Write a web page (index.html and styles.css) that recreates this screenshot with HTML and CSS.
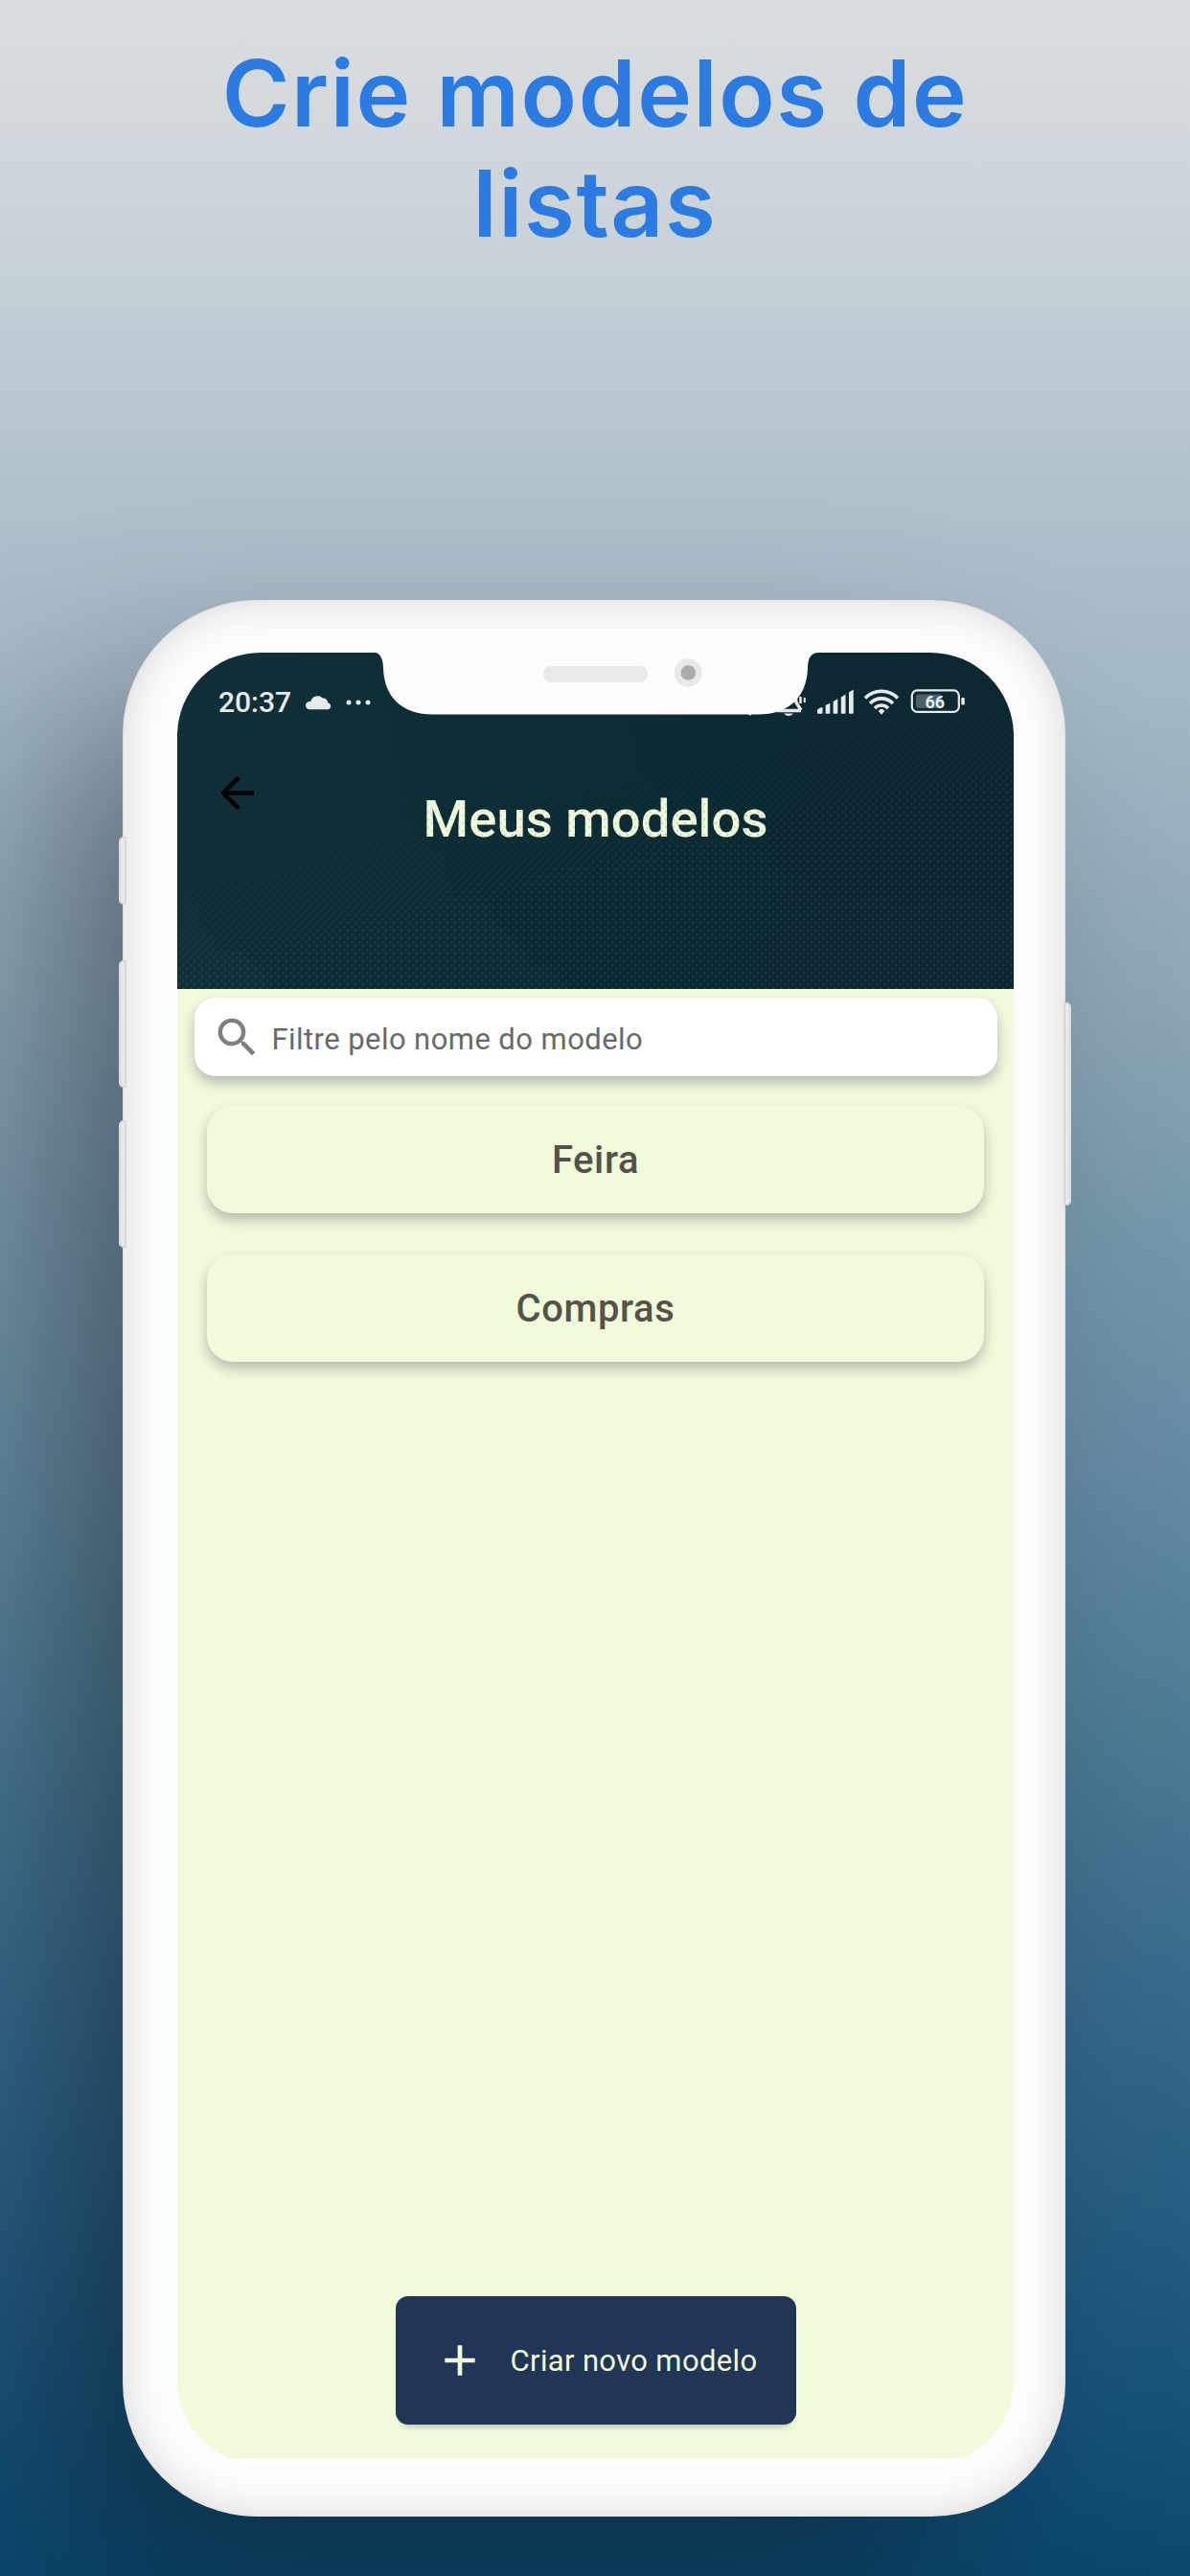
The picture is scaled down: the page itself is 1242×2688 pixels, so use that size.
FILE: index.html
```html
<!DOCTYPE html>
<html lang="pt-BR">
<head>
<meta charset="utf-8">
<title>Crie modelos de listas</title>
<link rel="stylesheet" href="styles.css">
</head>
<body>
<main class="poster">
  <h1 class="headline"><span class="line-a">Crie modelos de</span><br><span class="line-b">listas</span></h1>
  <div class="phone">
    <div class="body">
      <div class="screen">
        <header class="top">
          <svg class="weave" width="873" height="351" aria-hidden="true">
            <defs>
              <pattern id="dots" width="8" height="8" patternUnits="userSpaceOnUse">
                <circle cx="2" cy="2" r="1.2" fill="#3b5b60"/><circle cx="6" cy="6" r="1.2" fill="#3b5b60"/>
              </pattern>
              <linearGradient id="fade" x1="0" y1="0" x2="0.5" y2="1">
                <stop offset="0" stop-color="#fff" stop-opacity=".05"/>
                <stop offset=".5" stop-color="#fff" stop-opacity=".12"/>
                <stop offset="1" stop-color="#fff" stop-opacity=".4"/>
              </linearGradient>
              <mask id="m"><rect width="873" height="351" fill="url(#fade)"/></mask>
            </defs>
            <rect width="873" height="351" fill="url(#dots)" mask="url(#m)"/>
          </svg>
          <div class="status">
            <span class="clock">20:37</span>
            <svg class="cloud" width="28" height="16" viewBox="0 0 28 16"><path d="M4 15.3a4 4 0 0 1 .4-8.4h.9A7.3 7.3 0 0 1 17.800 3.600a5 5 0 0 1 5.500 4.600A3.700 3.700 0 0 1 23.800 15.300z" fill="#e6eaec"/></svg>
            <svg class="more" width="26" height="6" viewBox="0 0 26 6" fill="#e6eaec"><circle cx="3" cy="3" r="2.500"/><circle cx="13" cy="3" r="2.500"/><circle cx="23" cy="3" r="2.500"/></svg>
            <svg class="tray" width="232" height="32" viewBox="775 718 232 32" fill="none" stroke="#e6eaec">
              <path d="M777 744l4 4 3-4z" fill="#e6eaec" stroke="none"/>
              <path d="M809 742.500h25M828 726l1 8 5 8" stroke-width="3.400"/>
              <path d="M816 745.500h10q-5 5-10 0z" fill="#e6eaec" stroke="none"/>
              <path d="M833.500 728v7" stroke-width="2.500"/><path d="M837.800 729v5" stroke-width="2"/>
              <g fill="#e6eaec" stroke="none">
                <path d="M851 742.500q0-2.500 5.500-3.500v6q0 .7-.7.700h-4.100q-.7 0-.7-.7z"/>
                <path d="M859.600 737l4.700-2.300v10.300q0 .7-.7.700h-3.300q-.7 0-.7-.7z"/>
                <path d="M867.600 733l4.700-2.800v14.800q0 .7-.7.700h-3.300q-.7 0-.7-.7z"/>
                <path d="M875.800 728.500l4.700-3v19.500q0 .7-.7.700h-3.300q-.7 0-.7-.7z"/>
                <path d="M884 723.500l4.700-3v24.500q0 .7-.7.700h-3.300q-.7 0-.7-.7z"/>
              </g>
              <path d="M901 729.500a23.500 23.500 0 0 1 34 0" stroke-width="3.700"/>
              <path d="M906 735a16.500 16.500 0 0 1 24 0" stroke-width="3.700"/>
              <path d="M911 740a9.800 9.800 0 0 1 14 0" stroke-width="3.500"/>
              <path d="M914.700 743q3.300-4.500 6.600 0l-3.300 3.800z" fill="#e6eaec" stroke="none"/>
              <rect x="949.800" y="721.300" width="49" height="22.600" rx="5.500" stroke-width="2.200"/>
              <rect x="954" y="725.500" width="27" height="14.500" rx="2.500" fill="#4b6067" stroke="none"/>
              <rect x="1001.300" y="729" width="3.500" height="7.500" rx="1" fill="#e6eaec" stroke="none"/>
              <text x="973.800" y="739.700" class="charge">66</text>
            </svg>
          </div>
          <svg class="back" width="53" height="53" viewBox="0 0 24 24"><path d="M20 11H7.830l5.590-5.590L12 4l-8 8 8 8 1.410-1.410L7.830 13H20v-2z"/></svg>
          <h2 class="title">Meus modelos</h2>
        </header>
        <section class="content">
          <div class="search">
            <svg width="53" height="53" viewBox="0 0 24 24" fill="#7f7f7f"><path d="M15.500 14h-.79l-.28-.27A6.471 6.471 0 0 0 16 9.500 6.500 6.500 0 1 0 9.500 16c1.610 0 3.090-.59 4.230-1.570l.27.28v.79l5 4.990L20.490 19l-4.990-5zm-6 0C7.010 14 5 11.990 5 9.500S7.010 5 9.500 5 14 7.010 14 9.500 11.990 14 9.500 14z"/></svg>
            <span class="hint">Filtre pelo nome do modelo</span>
          </div>
          <div class="card">Feira</div>
          <div class="card">Compras</div>
          <button class="create">
            <svg width="32" height="32" viewBox="0 0 32 32"><path d="M16 .3v31.400M.3 16h31.400" stroke="#f0fadc" stroke-width="4.700"/></svg>
            <span>Criar novo modelo</span>
          </button>
        </section>
      </div>
      <svg class="notch" width="466" height="65" viewBox="389 681 466 65">
        <path d="M389 680C396 681 399.800 686 400 697C401 728 420 745.500 452 745.500H791C823 745.500 842 728 843 697C843.200 686 847 681 854 681V680z" fill="#fcfcfc"/>
        <rect x="567" y="695" width="109" height="17" rx="8" fill="#e9e9e9"/>
        <circle cx="718.300" cy="702" r="14.700" fill="#e9e9e9"/>
        <circle cx="718.300" cy="702" r="7.800" fill="#ababab"/>
      </svg>
    </div>
    <i class="key key-mute"></i>
    <i class="key key-up"></i>
    <i class="key key-down"></i>
    <i class="key key-power"></i>
  </div>
</main>
</body>
</html>
```
FILE: styles.css
```css
* { box-sizing: border-box; }

body { margin: 0; }

.poster {
  width: 1242px;
  height: 2688px;
  overflow: hidden;
  display: flex;
  flex-direction: column;
  align-items: center;
  background: linear-gradient(180deg, #dadee0 0%, #ccd4da 8%, #b0c1cb 19%, #a3b7c4 27%, #8da7b6 38%, #7798ac 47%, #648aa2 57%, #4a7993 68%, #35688b 78%, #1c557c 91%, #0a486e 100%);
  font-family: Roboto, "Liberation Sans", sans-serif;
}

.headline {
  margin: 0;
  height: 626px;
  padding-top: 40px;
  text-align: center;
  font: 600 96px/115px Inter, "Open Sans", sans-serif;
  color: #2c7be2;
  white-space: nowrap;
}

.line-a { letter-spacing: 1.6px; }
.line-b { letter-spacing: 1.6px; }

.phone {
  position: relative;
  width: 984px;
  height: 2000px;
  left: -1px;
}

.body {
  position: relative;
  height: 100%;
  padding: 55px 54px 55px 57px;
  border-radius: 140px;
  background: #fcfcfc;
  box-shadow: inset 0 0 44px rgba(0, 0, 0, .15), inset 0 0 2px rgba(0, 0, 0, .12), -85px 90px 200px -20px rgba(10, 10, 15, .42);
}

.key {
  position: absolute;
  left: -4px;
  width: 8px;
  border-radius: 5px 0 0 5px;
  background: #e8e8e8;
  border: 2px solid #dadada;
}
.key-mute { top: 247px; height: 71px; }
.key-up { top: 376px; height: 133px; }
.key-down { top: 543px; height: 133px; }
.key-power { left: 982px; top: 420px; height: 212px; border-radius: 0 5px 5px 0; }

.screen {
  height: 1890px;
  border-radius: 87px;
  overflow: hidden;
  background: #fff;
  display: flex;
  flex-direction: column;
}

.top {
  position: relative;
  height: 351px;
  flex: none;
  background: linear-gradient(100deg, #112f36, #0c2a32 55%, #0b2730);
}

.weave { position: absolute; inset: 0; }

.status {
  position: relative;
  display: flex;
  align-items: center;
  height: 34px;
  margin: 0 49px 0 43px;
  top: 35px;
}

.clock { font-size: 30px; line-height: 34px; color: #e6eaec; width: 91px; font-weight: 500; }
.cloud { margin: -1px 14px 0 0; }
.tray { margin-left: auto; }
.charge { font: 700 18px Roboto, sans-serif; fill: #e6eaec; stroke: none; text-anchor: middle; }

.back { display: block; margin: 86px 0 0 36px; }

.title {
  margin: -32px 0 0;
  text-align: center;
  font-size: 54.5px;
  line-height: 64px;
  font-weight: 500;
  color: #f0fadc;
}

.content {
  flex: none;
  height: 1533px;
  padding: 9px 17px 35px;
  background: #f1fadb;
  display: flex;
  flex-direction: column;
  align-items: center;
}

.search {
  width: 838px;
  height: 82px;
  flex: none;
  display: flex;
  align-items: center;
  padding-left: 18px;
  gap: 10px;
  border-radius: 22px;
  background: #fff;
  margin-bottom: 31px;
  box-shadow: 0 7px 13px rgba(60, 60, 90, .33);
}

.hint { font-size: 31px; letter-spacing: .43px; color: #696969; padding-top: 4px; }

.card {
  width: 811px;
  height: 112px;
  flex: none;
  display: flex;
  align-items: center;
  justify-content: center;
  border-radius: 27px;
  background: #f1fadb;
  margin-bottom: 43px;
  font-size: 40px;
  font-weight: 500;
  letter-spacing: .6px;
  color: #55524a;
  box-shadow: 0 7px 13px rgba(60, 60, 90, .33);
}

.create {
  margin-top: auto;
  width: 418px;
  height: 134px;
  display: flex;
  align-items: center;
  padding: 0 0 0 51px;
  gap: 37px;
  border: 0;
  border-radius: 13px;
  background: #213555;
  color: #f0fadc;
  font: 400 31px Roboto, sans-serif;
  letter-spacing: .35px;
  white-space: nowrap;
  box-shadow: 0 8px 6px -6px rgba(60, 50, 30, .3);
}

.notch { position: absolute; left: 261px; top: 55px; }
```
